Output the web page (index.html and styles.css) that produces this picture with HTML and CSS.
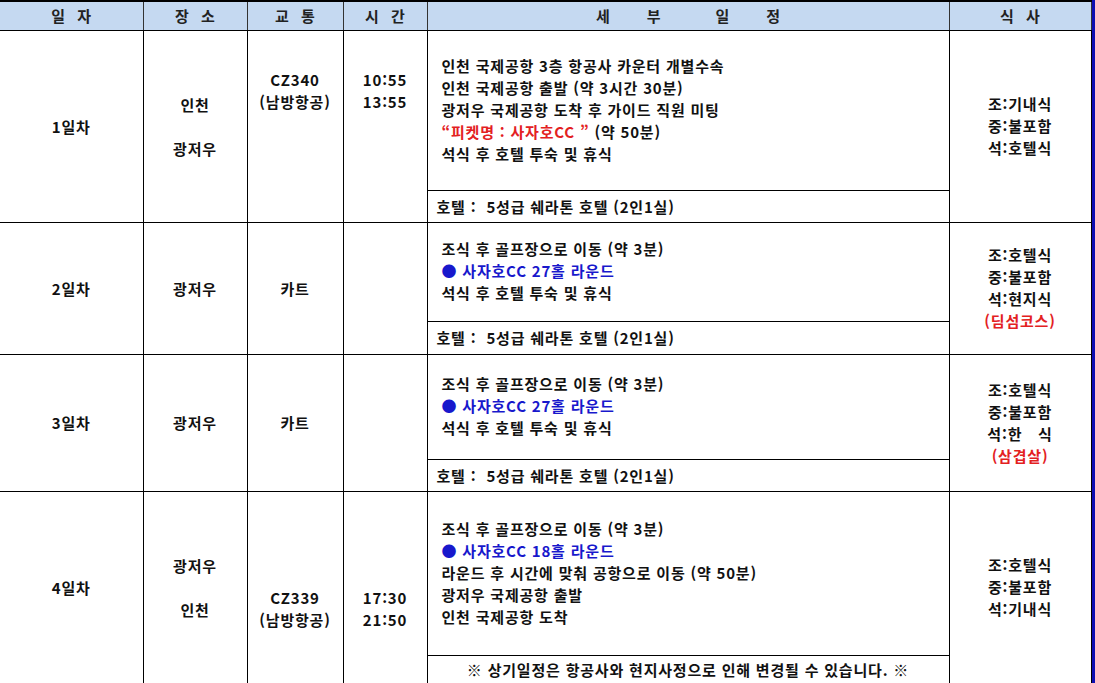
FILE: index.html
```html
<!DOCTYPE html>
<html lang="ko">
<head>
<meta charset="utf-8">
<title>일정표</title>
<link rel="stylesheet" href="styles.css">
</head>
<body>
<div class="sheet">
<table class="itinerary">
<colgroup>
<col class="c-day"><col class="c-place"><col class="c-trans"><col class="c-time"><col class="c-detail"><col class="c-meal">
</colgroup>
<thead>
<tr class="head">
<th class="first">일 자</th>
<th>장 소</th>
<th>교 통</th>
<th>시 간</th>
<th><span class="spread"><span>세</span><span class="wide">부</span><span>일</span><span>정</span></span></th>
<th>식 사</th>
</tr>
</thead>
<tbody>
<tr class="r1a">
<td rowspan="2" class="first">1일차</td>
<td rowspan="2">인천<br><br>광저우</td>
<td rowspan="2" class="top t1">CZ340<br>(남방항공)</td>
<td rowspan="2" class="top t1">10:55<br>13:55</td>
<td class="detail">인천 국제공항 3층 항공사 카운터 개별수속<br>인천 국제공항 출발 (약 3시간 30분)<br>광저우 국제공항 도착 후 가이드 직원 미팅<br><span class="red">“피켓명 : 사자호CC ”</span> (약 50분)<br>석식 후 호텔 투숙 및 휴식</td>
<td rowspan="2" class="meal">조:기내식<br>중:불포함<br>석:호텔식</td>
</tr>
<tr class="r1b">
<td class="hotel">호텔 :&nbsp; 5성급 쉐라톤 호텔 (2인1실)</td>
</tr>
<tr class="r2a">
<td rowspan="2" class="first">2일차</td>
<td rowspan="2">광저우</td>
<td rowspan="2">카트</td>
<td rowspan="2"></td>
<td class="detail">조식 후 골프장으로 이동 (약 3분)<br><span class="blue">● 사자호CC 27홀 라운드</span><br>석식 후 호텔 투숙 및 휴식</td>
<td rowspan="2" class="meal">조:호텔식<br>중:불포함<br>석:현지식<br><span class="red">(딤섬코스)</span></td>
</tr>
<tr class="r2b">
<td class="hotel">호텔 :&nbsp; 5성급 쉐라톤 호텔 (2인1실)</td>
</tr>
<tr class="r3a">
<td rowspan="2" class="first">3일차</td>
<td rowspan="2">광저우</td>
<td rowspan="2">카트</td>
<td rowspan="2"></td>
<td class="detail">조식 후 골프장으로 이동 (약 3분)<br><span class="blue">● 사자호CC 27홀 라운드</span><br>석식 후 호텔 투숙 및 휴식</td>
<td rowspan="2" class="meal">조:호텔식<br>중:불포함<br>석:한　식<br><span class="red">(삼겹살)</span></td>
</tr>
<tr class="r3b">
<td class="hotel">호텔 :&nbsp; 5성급 쉐라톤 호텔 (2인1실)</td>
</tr>
<tr class="r4a">
<td rowspan="2" class="first">4일차</td>
<td rowspan="2">광저우<br><br>인천</td>
<td rowspan="2" class="top t4">CZ339<br>(남방항공)</td>
<td rowspan="2" class="top t4">17:30<br>21:50</td>
<td class="detail">조식 후 골프장으로 이동 (약 3분)<br><span class="blue">● 사자호CC 18홀 라운드</span><br>라운드 후 시간에 맞춰 공항으로 이동 (약 50분)<br>광저우 국제공항 출발<br>인천 국제공항 도착</td>
<td rowspan="2" class="meal">조:호텔식<br>중:불포함<br>석:기내식</td>
</tr>
<tr class="r4b">
<td class="note">※ 상기일정은 항공사와 현지사정으로 인해 변경될 수 있습니다. ※</td>
</tr>
</tbody>
</table>
</div>
</body>
</html>
```

FILE: styles.css
```css
html, body {
  margin: 0;
  padding: 0;
  background: #ffffff;
}

body {
  font-family: "Noto Sans CJK KR", "Noto Sans", sans-serif;
  overflow: hidden;
}

.sheet {
  width: 1091px;
  min-height: 683px;
  border-right: 4px solid #0d0db2;
}

.itinerary {
  width: 1091px;
  border-collapse: collapse;
  table-layout: fixed;
}

.c-day { width: 143px; }
.c-place { width: 104px; }
.c-trans { width: 96px; }
.c-time { width: 84px; }
.c-detail { width: 522px; }
.c-meal { width: 142px; }

th, td {
  border: 1px solid #000;
  padding: 0;
  font-size: 15px;
  font-weight: 700;
  line-height: 22px;
  text-align: center;
  vertical-align: middle;
  color: #111;
}

td {
  letter-spacing: 0.8px;
}

th.first, td.first {
  border-left: none;
}

.head th {
  background: #c5d9f1;
  height: 28px;
  color: #222;
  word-spacing: 8px;
  border-top: 2px solid #000;
  border-left-color: #333;
  border-right-color: #333;
}

.spread {
  display: inline-flex;
  gap: 37px;
}

.spread .wide {
  margin-right: 18px;
}

.r1a { height: 160px; }
.r1b { height: 32px; }
.r2a { height: 99px; }
.r2b { height: 33px; }
.r3a { height: 105px; }
.r3b { height: 32px; }
.r4a { height: 164px; }
.r4b { height: 28px; }

td.top {
  vertical-align: top;
}

td.t1 { padding-top: 38px; }
td.t4 { padding-top: 95px; }

td.detail {
  text-align: left;
  padding-left: 14px;
  padding-bottom: 2px;
}

td.hotel {
  text-align: left;
  padding-left: 9px;
}

td.note {
  text-align: center;
}

td.meal {
  padding-bottom: 1px;
}

.red { color: #e3211f; }
.blue { color: #1818cc; }
```
